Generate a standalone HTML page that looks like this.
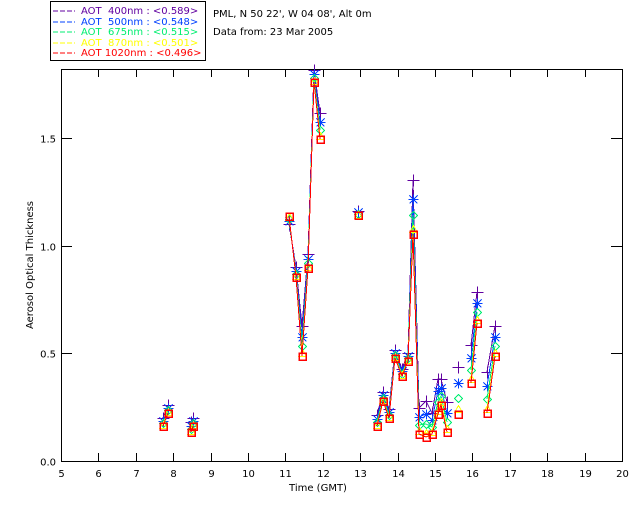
<!DOCTYPE html><html><head><style>
body{margin:0;background:#fff;width:640px;height:512px;overflow:hidden}
svg{display:block}
text{font-family:"DejaVu Sans","Liberation Sans",sans-serif;font-size:10px}
</style></head><body>
<svg id="s" width="640" height="512" xmlns="http://www.w3.org/2000/svg" shape-rendering="crispEdges">
<rect x="50.5" y="1.5" width="155" height="59" fill="#fff" stroke="#000"/>
<g font-size="10">
<line x1="53" y1="11" x2="75" y2="11" stroke="#6000a0" stroke-dasharray="5,2"/><text x="81" y="14" fill="#6000a0" xml:space="preserve">AOT  400nm : &lt;0.589&gt;</text>
<line x1="53" y1="22" x2="75" y2="22" stroke="#0040ff" stroke-dasharray="5,2"/><text x="81" y="25" fill="#0040ff" xml:space="preserve">AOT  500nm : &lt;0.548&gt;</text>
<line x1="53" y1="32" x2="75" y2="32" stroke="#00ee70" stroke-dasharray="5,2"/><text x="81" y="35" fill="#00ee70" xml:space="preserve">AOT  675nm : &lt;0.515&gt;</text>
<line x1="53" y1="43" x2="75" y2="43" stroke="#ffff00" stroke-dasharray="5,2"/><text x="81" y="46" fill="#ffff00" xml:space="preserve">AOT  870nm : &lt;0.501&gt;</text>
<line x1="53" y1="53" x2="75" y2="53" stroke="#ff0000" stroke-dasharray="5,2"/><text x="81" y="56" fill="#ff0000" xml:space="preserve">AOT 1020nm : &lt;0.496&gt;</text>
</g>
<text x="213" y="17">PML, N 50 22', W 04 08', Alt 0m</text>
<text x="213" y="35">Data from: 23 Mar 2005</text>
<rect x="61.5" y="69.5" width="561" height="392" fill="none" stroke="#000"/>
<g id="ax" stroke="#000"></g>
<g id="lab"></g>
<text x="318" y="491" text-anchor="middle">Time (GMT)</text>
<text transform="translate(33,265) rotate(-90)" text-anchor="middle" font-size="9">Aerosol Optical Thickness</text>
<g id="d"></g>
</svg>
<script>
var NS="http://www.w3.org/2000/svg",ax=document.getElementById('ax'),lab=document.getElementById('lab'),d=document.getElementById('d');
function el(p,t,a,txt){var e=document.createElementNS(NS,t);for(var k in a)e.setAttribute(k,a[k]);if(txt)e.textContent=txt;p.appendChild(e);return e;}
for(var h=5;h<=20;h++){var x=Math.round(61+(h-5)*37.4)+.5;
 if(h>5&&h<20){el(ax,'line',{x1:x,y1:461,x2:x,y2:453});el(ax,'line',{x1:x,y1:69,x2:x,y2:77});}
 el(lab,'text',{x:x,y:477,'text-anchor':'middle'},String(h));}
[0,0.5,1,1.5].forEach(function(v){var y=Math.round(461-v*215.4)+.5;
 if(v>0){el(ax,'line',{x1:61,y1:y,x2:72,y2:y});el(ax,'line',{x1:622,y1:y,x2:611,y2:y});}
 el(lab,'text',{x:56,y:y+4,'text-anchor':'end'},v.toFixed(1));});
// [x, redY, purpleOffset]
var groups=[
 [[163,426,-8],[168,413,-8]],
 [[191,432,-10],[193,426,-8]],
 [[289,216,8],[296,277,-10],[302,356,-30],[308,268,-14],[314,82,-12],[320,139,-26]],
 [[358,215,-4]],
 [[377,426,-11],[383,401,-9],[389,418,-9],[395,358,-8],[402,376,-7],[408,361,-8],[413,234,-54],[419,434,-26],[426,437,-36],[432,434,-21],[438,414,-35],[441,405,-26],[447,432,-30]],
 [[458,414,-47]],
 [[471,383,-38],[477,323,-31]],
 [[487,413,-41],[495,356,-30]]
];
var fac={p:1,b:0.65,g:0.35,y:0.1,r:0};
var series=[['p','#6000a0'],['b','#0040ff'],['g','#00ee70'],['y','#ffff00'],['r','#ff0000']];
series.forEach(function(s){
 groups.forEach(function(g){
  var pts=g.map(function(p){return [p[0],Math.round(p[1]+p[2]*fac[s[0]])];});
  if(pts.length>1)el(d,'polyline',{points:pts.map(function(p){return p.join(',')}).join(' '),fill:'none',stroke:s[1],'stroke-width':1});
  pts.forEach(function(p){var x=p[0]+.5,y=p[1]+.5;
   if(s[0]=='p'){el(d,'path',{d:'M'+(x-6)+' '+y+'H'+(x+6)+'M'+x+' '+(y-6)+'V'+(y+6),stroke:s[1],fill:'none'});}
   else if(s[0]=='b'){el(d,'path',{d:'M'+(x-5)+' '+y+'H'+(x+5)+'M'+x+' '+(y-5)+'V'+(y+5)+'M'+(x-4)+' '+(y-4)+'L'+(x+4)+' '+(y+4)+'M'+(x+4)+' '+(y-4)+'L'+(x-4)+' '+(y+4),stroke:s[1],fill:'none','stroke-width':1});}
   else if(s[0]=='g'){el(d,'path',{d:'M'+x+' '+(y-4)+'L'+(x+4)+' '+y+'L'+x+' '+(y+4)+'L'+(x-4)+' '+y+'Z',stroke:s[1],fill:'none'});}
   else if(s[0]=='y'){el(d,'path',{d:'M'+x+' '+(y-4)+'L'+(x+4)+' '+(y+3)+'L'+(x-4)+' '+(y+3)+'Z',stroke:s[1],fill:'none'});}
   else {el(d,'rect',{x:x-3.5,y:y-3.5,width:7,height:7,stroke:s[1],fill:'none','stroke-width':1.5});}
  });
 });
});
</script>
</body></html>
